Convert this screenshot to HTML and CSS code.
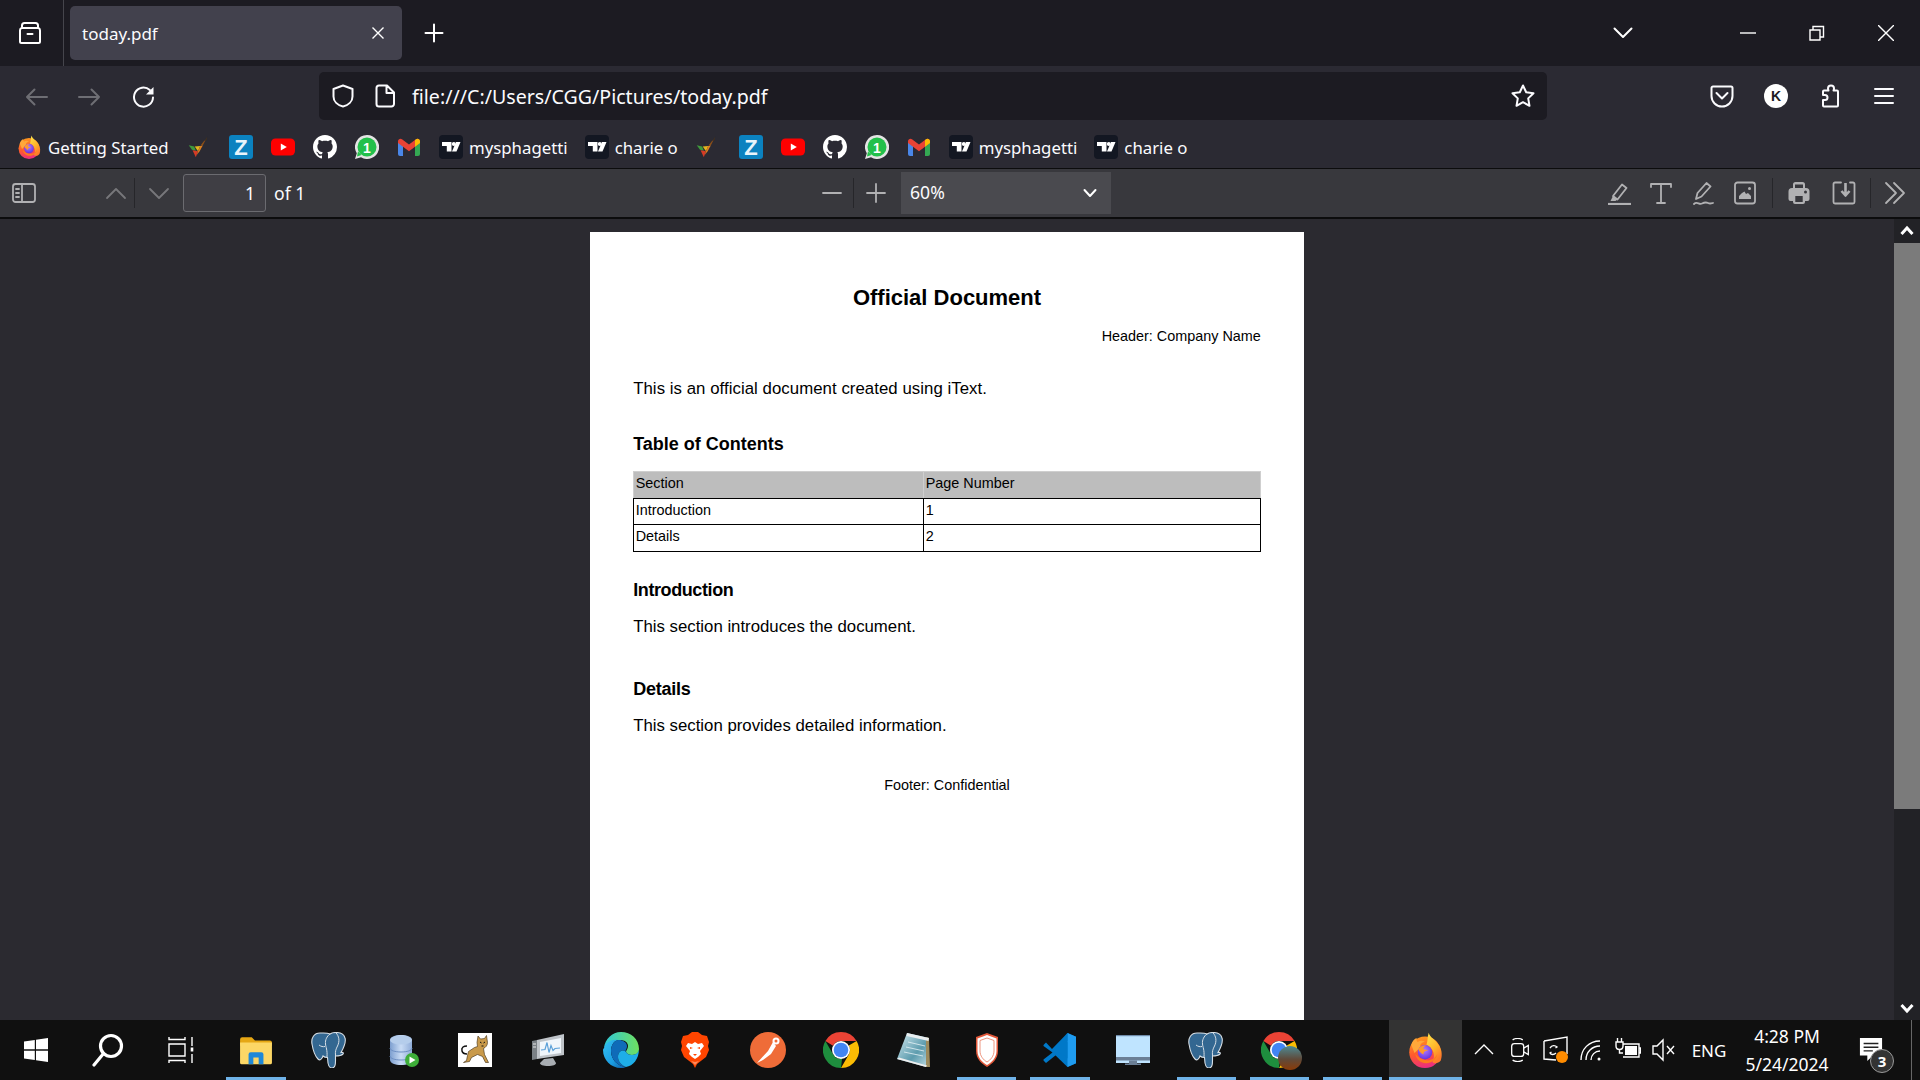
FILE: index.html
```html
<!DOCTYPE html>
<html lang="en">
<head>
<meta charset="utf-8">
<title>today.pdf</title>
<link rel="stylesheet" href="styles.css">
</head>
<body>
<svg class="defs" width="0" height="0" aria-hidden="true">
  <defs>
    <linearGradient id="ffBody" x1="0.35" y1="0" x2="0.6" y2="1"><stop offset="0" stop-color="#ff9a1e"/><stop offset=".5" stop-color="#ff5a2c"/><stop offset="1" stop-color="#ea2a86"/></linearGradient>
    <linearGradient id="ffFlame" x1="0" y1="0" x2="0.5" y2="1"><stop offset="0" stop-color="#ffe84e"/><stop offset=".6" stop-color="#ffb52a"/><stop offset="1" stop-color="#ff7a2a"/></linearGradient>
    <radialGradient id="ffCore" cx=".45" cy=".35" r=".75"><stop offset="0" stop-color="#b07cff"/><stop offset=".7" stop-color="#7542e5"/><stop offset="1" stop-color="#592acb"/></radialGradient>
    <linearGradient id="edgeA" x1="0" y1="0" x2="1" y2="1"><stop offset="0" stop-color="#35c1f1"/><stop offset=".6" stop-color="#1b9de2"/><stop offset="1" stop-color="#0c59a4"/></linearGradient>
    <linearGradient id="edgeB" x1="0" y1="0" x2="1" y2="0"><stop offset="0" stop-color="#2fc8d8"/><stop offset="1" stop-color="#6fe05f"/></linearGradient>
    <linearGradient id="dbG" x1="0" y1="0" x2="1" y2="0"><stop offset="0" stop-color="#7d9fd0"/><stop offset=".5" stop-color="#c9dcf5"/><stop offset="1" stop-color="#8facd8"/></linearGradient>
    <linearGradient id="noteG" x1="0" y1="0" x2="1" y2="1"><stop offset="0" stop-color="#d8edf3"/><stop offset=".6" stop-color="#5d9cae"/><stop offset="1" stop-color="#c5dfe6"/></linearGradient>
    <symbol id="i-ff" viewBox="0 0 24 24">
      <circle cx="12" cy="13.500" r="10.500" fill="url(#ffBody)"/>
      <path d="M14.500.5c.5 3 4.500 4.500 7 8.500 2 3.500 2 7 1 10-1.500 2-4.500 2.500-5.500 1 2-4 1-9-4-11.500 1-2.500.5-5.500 1.500-8z" fill="url(#ffFlame)"/>
      <path d="M2.800 8.500C3.500 6 5 4.500 6.500 4c-.5 1.200 0 2 .6 2.600 1.500-1 3.400-1.100 4.900-.1-2.500.5-3.500 2-3 3.500L5 14z" fill="#ffa83a"/>
      <path d="M5.500 14.500c.8 4 3.800 6.300 7.300 6.300 3.800 0 6.700-2.500 7.400-6-1.400 2.700-4 4.200-7 4-3.400-.2-6-1.800-7.700-4.300z" fill="#ff7a1e"/>
      <circle cx="12" cy="13.500" r="4.800" fill="url(#ffCore)"/>
      <path d="M7.500 11.500c1-1.700 3-2.700 5.300-2.500-1.300.6-2 1.500-1.800 2.500.8.400 2.500.3 3.300.8-2-.1-3.500 1-3.300 2.700-1.300-.6-2.800-1.900-3.500-3.500z" fill="#ff9a2a"/>
    </symbol>
    <symbol id="i-v" viewBox="2 1.500 19 22">
      <path d="M3 11l5 1 1.500 4L6 15z" fill="#3f9a3c"/><path d="M8.500 12l5-.5-2 5z" fill="#e3b71e"/><path d="M6.500 15.500l5 1-2 5.500z" fill="#d63b26"/><path d="M11.500 16.500l2-5 2.500-.5-3 5.500-2.500 3z" fill="#df7f1f"/><path d="M14 11l3-4 1.500-1-2.500 5z" fill="#8c4f18"/><path d="M17.500 7l2.500-4-1 3.500z" fill="#4a3218"/>
    </symbol>
    <symbol id="i-z" viewBox="0 0 24 24">
      <rect width="24" height="24" rx="3" fill="#0b82c0"/><text x="12" y="20" class="zt" text-anchor="middle">Z</text>
    </symbol>
    <symbol id="i-yt" viewBox="0 0 24 24">
      <rect y="3.500" width="24" height="17" rx="4.500" fill="#f00"/><path d="M9.800 8.500v7l6-3.500z" fill="#fff"/>
    </symbol>
    <symbol id="i-gh" viewBox="0 0 16 16">
      <path fill="#fff" d="M8 0C3.580 0 0 3.580 0 8c0 3.540 2.290 6.530 5.470 7.590.4.070.55-.17.55-.38 0-.19-.01-.82-.01-1.490-2.010.37-2.530-.49-2.690-.94-.09-.23-.48-.94-.82-1.130-.28-.15-.68-.52-.01-.53.63-.01 1.080.58 1.230.82.72 1.210 1.870.87 2.330.66.07-.52.28-.87.51-1.070-1.780-.2-3.640-.89-3.640-3.950 0-.87.31-1.590.82-2.150-.08-.2-.36-1.020.08-2.120 0 0 .67-.21 2.200.82.64-.18 1.320-.27 2-.27.68 0 1.360.09 2 .27 1.530-1.040 2.200-.82 2.200-.82.44 1.100.16 1.920.08 2.120.51.56.82 1.270.82 2.150 0 3.070-1.870 3.750-3.650 3.950.29.25.54.73.54 1.480 0 1.070-.01 1.930-.01 2.200 0 .21.15.46.55.38A8.013 8.013 0 0016 8c0-4.420-3.580-8-8-8z"/>
    </symbol>
    <symbol id="i-wa" viewBox="0 0 24 24">
      <path d="M12 0a12 12 0 0 0-10.200 18.300L0 24l6-1.700A12 12 0 1 0 12 0z" fill="#e4e4e4"/>
      <circle cx="12" cy="12" r="9.500" fill="#22c04a"/><path d="M3 16.500l-1 5 4.500-1.500z" fill="#22c04a"/>
      <text x="12" y="17.500" class="wt" text-anchor="middle">1</text>
    </symbol>
    <symbol id="i-gm" viewBox="0 0 24 24">
      <path d="M1 7h5v14H3a2 2 0 0 1-2-2z" fill="#4a86e8"/><path d="M18 7h5v12a2 2 0 0 1-2 2h-3z" fill="#34a853"/>
      <path d="M1 6.500C1 4 3.500 3 5 4.200l7 5.300 7-5.300C20.500 3 23 4 23 6.500V8l-11 8.200L1 8z" fill="#ea4335"/>
      <path d="M18 5.200l1-1C20.500 3 23 4 23 6.500V8l-5 3.800z" fill="#fbbc04"/>
    </symbol>
    <symbol id="i-tv" viewBox="0 0 24 24">
      <rect width="24" height="24" rx="4" fill="#131722"/>
      <path d="M3 7h9.500v9.500h-4.700V11H3z" fill="#fff"/><circle cx="14.800" cy="9" r="2" fill="#fff"/>
      <path d="M17 7h4.500l-4 9.500h-4.500z" fill="#fff"/>
    </symbol>
    <symbol id="i-pg" viewBox="0 0 36 36">
      <path d="M9 1C3 1 0 6 1 12c1 6 3 12 6 15 2 2 4 0 5-3 1 1 3 1.500 4.500 1.500l.5 5.500c.5 3 2 5 4 5 2.500 0 3.500-3 3.500-7v-5c2.500 0 5.500 0 7.500-2 1-1 0-2-2-1.500 3-5.500 5-11.500 4-14.500-1-4-5-5.500-9-5.500-2.500 0-4.500.5-6 1.500C16 .5 13 1 9 1z" fill="#336791" stroke="#d7dfe6" stroke-width="1.100"/>
      <path d="M19 2c-3 2-5 6-4.500 10 .3 3 2 6 1.500 13M25 1c3 3 4 8 1.500 13-1.500 3-2.500 5-2 10M8 13c2 1.500 4 2 6 1.500" fill="none" stroke="#d7dfe6" stroke-width="1"/>
    </symbol>
    <symbol id="i-chrome" viewBox="0 0 36 36">
      <path d="M18 0a18 18 0 0 1 15.600 9H18a9 9 0 0 0-8 4.800L2.400 9A18 18 0 0 1 18 0z" fill="#ea4335"/>
      <path d="M33.600 9A18 18 0 0 1 18 36l7.800-13.500a9 9 0 0 0 0-9z" fill="#fbbc04"/>
      <path d="M2.400 9l7.800 13.500a9 9 0 0 0 8 4.500h.8L18 36A18 18 0 0 1 2.400 9z" fill="#1e8e3e"/>
      <circle cx="18" cy="18" r="9" fill="#fff"/><circle cx="18" cy="18" r="7.300" fill="#4285f4"/>
    </symbol>
  </defs>
</svg>

<div class="tabbar">
  <div class="tabs-btn">
    <svg class="s24 line-w" viewBox="0 0 24 24"><path d="M4 6V4.500C4 3 5 2 6.500 2h11C19 2 20 3 20 4.500V6M3.500 7h17A2.500 2.500 0 0 1 22 9.500v11a1.500 1.500 0 0 1-1.500 1.500h-17A1.500 1.500 0 0 1 2 20.500v-11A2.500 2.500 0 0 1 3.500 7zM9.500 13h5"/></svg>
  </div>
  <div class="tab">
    <span class="tab-title">today.pdf</span>
    <svg class="s16 line-w thin" viewBox="0 0 16 16"><path d="M2.500 2.500l11 11M13.500 2.500l-11 11"/></svg>
  </div>
  <div class="newtab"><svg class="s20 line-w" viewBox="0 0 20 20"><path d="M10 1.500v17M1.500 10h17"/></svg></div>
  <div class="tabs-list"><svg class="s20 line-w" viewBox="0 0 20 20"><path d="M1.500 5.500l8.500 8.500 8.500-8.500"/></svg></div>
  <div class="wbtn"><svg class="s16 line-w thin" viewBox="0 0 16 16"><path d="M0 8h16"/></svg></div>
  <div class="wbtn"><svg class="s16 line-w thin" viewBox="0 0 16 16"><path d="M1 5h10v10H1zM4 5V1.500h10.500V12H11"/></svg></div>
  <div class="wbtn"><svg class="s16 line-w thin" viewBox="0 0 16 16"><path d="M0 0l16 16M16 0L0 16"/></svg></div>
</div>

<div class="navbar">
  <div class="nbtn lft dim"><svg class="s24 line" viewBox="0 0 24 24"><path d="M23 12H3M10.500 4.500L3 12l7.500 7.500"/></svg></div>
  <div class="nbtn lft dim"><svg class="s24 line" viewBox="0 0 24 24"><path d="M1 12h20M13.500 4.500L21 12l-7.500 7.500"/></svg></div>
  <div class="nbtn lft"><svg class="s24 line" viewBox="0 0 24 24"><path d="M21 12.500a9.500 9.500 0 1 1-3.200-7.500"/><path class="fillc" d="M21.500 2v7.500H14z"/></svg></div>
  <div class="urlbar">
    <svg class="s24 line" viewBox="0 0 24 24"><path d="M12 1.500L2.500 5v7.500c0 5 4 8.800 9.500 10 5.500-1.200 9.500-5 9.500-10V5z"/></svg>
    <svg class="s24 line page-ic" viewBox="0 0 24 24"><path d="M6 1.500h8l7 7v11.500a2.500 2.500 0 0 1-2.500 2.500h-12.500A2.500 2.500 0 0 1 3.500 20V4A2.500 2.500 0 0 1 6 1.500zM13.500 1.500V9H21"/></svg>
    <span class="url">file:///C:/Users/CGG/Pictures/today.pdf</span>
    <svg class="s24 line star" viewBox="0 0 24 24"><path d="M12 1.500l3.200 6.800 7.300 1-5.300 5.100 1.300 7.400-6.500-3.600-6.500 3.600 1.300-7.400-5.300-5.100 7.300-1z"/></svg>
  </div>
  <div class="nbtn first-right"><svg class="s24 line" viewBox="0 0 24 24"><path d="M3 2.500h18a1.500 1.500 0 0 1 1.500 1.500v8a10.500 10.500 0 0 1-21 0V4A1.500 1.500 0 0 1 3 2.500zM6.500 9l5.500 5.500L17.500 9"/></svg></div>
  <div class="nbtn"><div class="avatar">K</div></div>
  <div class="nbtn"><svg class="s24 line" viewBox="0 0 24 24"><path d="M13 1.500c-2 0-3 1.500-3 3 0 1 .3 1.500.5 2H6a1 1 0 0 0-1 1V11h2c1.500 0 2.500 1 2.500 2.500S8.500 16 7 16H5v5.500a1 1 0 0 0 1 1h13a1 1 0 0 0 1-1v-14a1 1 0 0 0-1-1h-3.500c.2-.5.5-1 .5-2 0-1.500-1-3-3-3z"/></svg></div>
  <div class="nbtn"><svg class="s24 line" viewBox="0 0 24 24"><path d="M3 5h18M3 12h18M3 19h18"/></svg></div>
</div>

<div class="bookmarks">
  <svg class="s24"><use href="#i-ff"/></svg><span class="bm-text gs">Getting Started</span>
  <div class="bm"><svg class="s24"><use href="#i-v"/></svg></div>
  <div class="bm bm-z"><svg class="s24"><use href="#i-z"/></svg></div>
  <div class="bm"><svg class="s24"><use href="#i-yt"/></svg></div>
  <div class="bm"><svg class="s24"><use href="#i-gh"/></svg></div>
  <div class="bm"><svg class="s24"><use href="#i-wa"/></svg></div>
  <div class="bm"><svg class="s24"><use href="#i-gm"/></svg></div>
  <div class="bm-lab"><svg class="s24"><use href="#i-tv"/></svg><span class="bm-text">mysphagetti</span></div>
  <div class="bm-lab"><svg class="s24"><use href="#i-tv"/></svg><span class="bm-text">charie o</span></div>
  <div class="bm bm-v2"><svg class="s24"><use href="#i-v"/></svg></div>
  <div class="bm bm-z"><svg class="s24"><use href="#i-z"/></svg></div>
  <div class="bm"><svg class="s24"><use href="#i-yt"/></svg></div>
  <div class="bm"><svg class="s24"><use href="#i-gh"/></svg></div>
  <div class="bm"><svg class="s24"><use href="#i-wa"/></svg></div>
  <div class="bm"><svg class="s24"><use href="#i-gm"/></svg></div>
  <div class="bm-lab"><svg class="s24"><use href="#i-tv"/></svg><span class="bm-text">mysphagetti</span></div>
  <div class="bm-lab"><svg class="s24"><use href="#i-tv"/></svg><span class="bm-text">charie o</span></div>
</div>

<div class="pdfbar">
  <div class="pbtn pb-side"><svg class="s24 line-g" viewBox="0 0 24 24"><rect x="1" y="3" width="22" height="18" rx="2.500"/><path d="M10 3v18M4 8h3M4 12h3M4 16h3"/></svg></div>
  <div class="pbtn pb-up dimg"><svg class="s24 line-g" viewBox="0 0 24 24"><path d="M3 17l9-9 9 9"/></svg></div>
  <div class="psep"></div>
  <div class="pbtn pb-down dimg"><svg class="s24 line-g" viewBox="0 0 24 24"><path d="M3 8l9 9 9-9"/></svg></div>
  <div class="pageinput">1</div>
  <span class="ofpages">of 1</span>
  <div class="pbtn pb-minus"><svg class="s24 line-g" viewBox="0 0 24 24"><path d="M3 12h18"/></svg></div>
  <div class="psep psep-z"></div>
  <div class="pbtn pb-plus"><svg class="s24 line-g" viewBox="0 0 24 24"><path d="M3 12h18M12 3v18"/></svg></div>
  <div class="zoomsel"><span class="zoomval">60%</span><svg class="s16 line-w" viewBox="0 0 16 16"><path d="M2.500 5l5.500 6 5.500-6"/></svg></div>
  <div class="pbtn pb-high"><svg class="s24 line-g" viewBox="0 0 24 24"><path d="M6 15l9-11.500 4.500 3.500-9 11.500z"/><path class="fillg" d="M6 15l4.500 3.500-2 1.500H3.500z"/><path d="M1 23.200h23" class="thick"/></svg></div>
  <div class="pbtn"><svg class="s24 line-g" viewBox="0 0 24 24"><path d="M2 6V3h20v3M12 3v19M8 22h8"/></svg></div>
  <div class="pbtn"><svg class="s24 line-g" viewBox="0 0 24 24"><path d="M5 18l1.500-6L15.500 2l4 3.500-9 10zM3 23c3-3 5 1 8-.5s4-1.500 6-.5 3 .5 5 0"/></svg></div>
  <div class="pbtn"><svg class="s24 line-g" viewBox="0 0 24 24"><rect x="2" y="1.500" width="20" height="21" rx="2.500"/><path class="fillg" d="M6 18v-3l3-3 2.500-1.500L13 13l2-1 3 3v3z"/><circle class="fillg" cx="16.500" cy="7.500" r="1.500"/></svg></div>
  <div class="psep psep-r1"></div>
  <div class="pbtn pb-print"><svg class="s24" viewBox="0 0 24 24"><path class="fillg" d="M6 7V3.500A2.500 2.500 0 0 1 8.500 1h7A2.500 2.500 0 0 1 18 3.500V7h1a3.500 3.500 0 0 1 3.500 3.500V18a2 2 0 0 1-2 2H18v1a2 2 0 0 1-2 2H8a2 2 0 0 1-2-2v-1H3.500a2 2 0 0 1-2-2v-7.500A3.500 3.500 0 0 1 5 7z"/><path class="holes" d="M8 3.500h8V7H8zM8.300 15h7.400v6H8.300z"/><circle class="holes" cx="18.500" cy="11" r="1.500"/></svg></div>
  <div class="pbtn pb-save"><svg class="s24 line-g" viewBox="0 0 24 24"><path d="M9 1.500H3A1.500 1.500 0 0 0 1.500 3v18A1.500 1.500 0 0 0 3 22.500h18a1.500 1.500 0 0 0 1.500-1.500V3A1.500 1.500 0 0 0 21 1.500h-3"/><path d="M13.500 2v11M9.500 10l4 4.500 4-4.500" class="thick"/></svg></div>
  <div class="psep psep-r2"></div>
  <div class="pbtn pb-more"><svg class="s24 line-g" viewBox="0 0 24 24"><path d="M3 2l10 10L3 22M11 2l10 10-10 10"/></svg></div>
</div>

<div class="viewer">
  <div class="pagewrap">
    <div class="page">
      <h1 class="doc-title">Official Document</h1>
      <p class="doc-header">Header: Company Name</p>
      <p class="doc-p doc-p1">This is an official document created using iText.</p>
      <h2 class="doc-h doc-toc">Table of Contents</h2>
      <table class="toc">
        <thead><tr><th class="col1">Section</th><th>Page Number</th></tr></thead>
        <tbody>
          <tr><td class="col1">Introduction</td><td>1</td></tr>
          <tr><td class="col1">Details</td><td>2</td></tr>
        </tbody>
      </table>
      <h2 class="doc-h doc-intro">Introduction</h2>
      <p class="doc-p doc-p2">This section introduces the document.</p>
      <h2 class="doc-h doc-details">Details</h2>
      <p class="doc-p doc-p3">This section provides detailed information.</p>
      <p class="doc-footer">Footer: Confidential</p>
    </div>
  </div>
  <div class="scrollbar">
    <div class="sb-arrow"><svg class="s14" viewBox="0 0 14 14"><path d="M1.500 10L7 4l5.500 6"/></svg></div>
    <div class="sb-thumb"></div>
    <div class="sb-rest"></div>
    <div class="sb-arrow"><svg class="s14" viewBox="0 0 14 14"><path d="M1.500 4L7 10l5.500-6"/></svg></div>
  </div>
</div>

<div class="taskbar">
  <div class="tb-start"><svg class="s24" viewBox="0 0 24 24"><path class="fillw" d="M0 3.500l10.800-1.500v9.300H0zM12 1.800L24 0v11.300H12zM0 12.700h10.800V22L0 20.500zM12 12.700h12V24l-12-1.800z"/></svg></div>
  <div class="tb-search"><svg class="s34" viewBox="0 0 34 34"><circle cx="20" cy="13" r="10.500" class="sw3"/><path d="M12.500 20.500L3 32" class="sw3"/></svg></div>
  <div class="tb-task"><svg class="s26 line-w thin" viewBox="0 0 26 28"><path d="M1 1v2.500h16V1M1 8h16v12H1zM1 27v-2.500h16V27M24 1v9M24 18v9"/><path d="M24 11.500v4" class="thick"/></svg></div>

  <div class="tb on"><svg class="s34" viewBox="0 0 32 32"><path d="M1 6a2 2 0 0 1 2-2h9l3 3h14a2 2 0 0 1 2 2v3H1z" fill="#e6a714"/><path d="M1 9h30v19a1.500 1.500 0 0 1-1.500 1.500h-27A1.500 1.500 0 0 1 1 28z" fill="#fcd766"/><path d="M9 29.500V20a2 2 0 0 1 2-2h10a2 2 0 0 1 2 2v9.500h-4.500V23h-5v6.500z" fill="#1e88d8"/></svg></div>
  <div class="tb"><svg class="s36"><use href="#i-pg"/></svg></div>
  <div class="tb"><svg class="s36" viewBox="0 0 36 36"><path d="M6 8c0-3 5-5 11-5s11 2 11 5v20c0 3-5 5-11 5S6 31 6 28z" fill="url(#dbG)"/><ellipse cx="17" cy="8" rx="11" ry="4.500" fill="#b5cdeb"/><path d="M6 16c0 2.500 5 4 11 4s11-1.500 11-4M6 24c0 2.500 5 4 11 4s11-1.500 11-4" fill="none" stroke="#6f90c4"/><circle cx="28" cy="28" r="7" fill="#3eae39"/><path d="M25.500 24.500v7l6-3.500z" fill="#fff"/></svg></div>
  <div class="tb"><svg class="s36" viewBox="0 0 36 36"><rect width="34" height="34" x="1" y="1" fill="#fff"/><path d="M21 4l2.500 3 4-.5 2-3 1 7c0 3-2 5-4 6l1 6 4 8h-3l-3-6-5-2-6 3-2 4-6 1 3-2 1-5 1-4 6-4 3-1-.5-4z" fill="#c99a4b" stroke="#3a2a12" stroke-width=".6"/><path d="M10 14c-3 0-6 1-5 5 .5 2 3 3 5 3" fill="none" stroke="#111" stroke-width="1.500"/><path d="M23 10l1.500 1M28 10l-1.500 1M24.500 14h2" stroke="#111" fill="none"/></svg></div>
  <div class="tb"><svg class="s36" viewBox="0 0 36 36"><path d="M7 8l27-6v21l-27 4z" fill="#bfc4c9"/><path d="M10 10l21-4v15l-21 3z" fill="#f0f6fb"/><path d="M11 18l4-.5 2-7 2 10 2-7 2 5 2-2 5-.5" fill="none" stroke="#5ba0d8" stroke-width="1.200"/><path d="M2 9l5-1v19l-5 1z" fill="#7a8085"/><path d="M14 27l9-1 3 5c0 2-3 3-8 3s-8-1-8-3z" fill="#a8adb2"/><path d="M3 12h3M3 15h3" stroke="#e8e8e8"/></svg></div>
  <div class="tb"><svg class="s36" viewBox="0 0 36 36"><path d="M18 0c10 0 18 7 18 17 0 3-2 6-7 6-3 0-5-1-6-3 0-2 2-3 2-6 0-4-4-6-8-6C9 8 4 11 1 16 2 7 9 0 18 0z" fill="url(#edgeB)"/><path d="M1 16C3 10 9 7 15 8c-4 1-7 5-7 11 0 8 6 15 15 16-2 1-3 1-5 1C8 36 0 28 0 18c0-.7.5-1.500 1-2z" fill="url(#edgeA)"/><path d="M15 8c4-.5 9 2 9 6 0 3-2 4-1 6-3-3-8-1-8 5 0 4 3 8 8 10C14 34 8 27 8 19c0-6 3-10 7-11z" fill="#0f6bb8"/><path d="M23 20c1 2 3 3 6 3 4 0 7-3 7-6 0 10-6 17-13 18-5-2-8-6-8-10 0-6 5-8 8-5z" fill="#1eaee8"/></svg></div>
  <div class="tb"><svg class="s36" viewBox="0 0 30 36"><path d="M8 3L12 0h6l4 3 5 1 2 6-1 4 1 4-3 7-9 7-2 4-2-4-9-7-3-7 1-4-1-4 2-6z" fill="#ff4500"/><path d="M15 33l-4-4 4 1 4-1z" fill="#ff8a5c"/><path d="M8 11l4 1 3-2 3 2 4-1 2 3-4 5 1 3-3 3-3 2-3-2-3-3 1-3-4-5z" fill="#fff"/><path d="M10 15l3 1-3 1zM20 15l-3 1 3 1zM13 22h4l-2 2z" fill="#ff4500"/></svg></div>
  <div class="tb"><svg class="s36" viewBox="0 0 36 36"><circle cx="18" cy="18" r="18" fill="#ef6c38"/><path d="M7 31l11-12 3 3-8 6zM18 19l5-9 3 4-5 8z" fill="#fff"/><circle cx="26" cy="9" r="3.500" fill="#fff"/><circle cx="26" cy="9" r="1.500" fill="#ef6c38"/></svg></div>
  <div class="tb"><svg class="s36"><use href="#i-chrome"/></svg></div>
  <div class="tb"><svg class="s36" viewBox="0 0 36 36"><path d="M11 1l22 5-3 29L1 27z" fill="url(#noteG)"/><path d="M30 5l3 1 1 29-4 0z" fill="#9c8a5c"/><path d="M11 1l22 5-.5 3L10.500 4z" fill="#e9eef0"/><path d="M1 27l29 8 1-1.500L3 25.500z" fill="#eee"/><path d="M12 10l17 4M10 15l18 4M8 20l19 4" stroke="#e6f2f6" stroke-width=".8" fill="none"/></svg></div>
  <div class="tb on"><svg class="s36" viewBox="0 0 30 36"><path d="M15 1l11 4v14c0 8-6 13-11 16C10 32 4 27 4 19V5z" fill="#e2583a"/><path d="M15 3l9.500 3.500V19c0 7-5 11.500-9.500 14C10.500 30.500 5.500 26 5.500 19V6.500z" fill="#fff"/><path d="M15 6l7 2.500V19c0 5-3.500 9-7 11-3.500-2-7-6-7-11V8.500z" fill="#fff" stroke="#ec8a72" stroke-width=".9"/></svg></div>
  <div class="tb on"><svg class="s36" viewBox="0 0 36 36"><path d="M25.500 1L34 4.800v26.400L25.500 35 11 21z" fill="#0078c8"/><path d="M25.500 1L34 4.800v26.400L25.500 35z" fill="#1f9cf0"/><path d="M25.500 10L14 18l11.500 8.500zM4 10.500L1.500 13v1l9 6.500-9 7v1L4 31l10-8 11.500-14V1L10 17z" fill="#0078c8"/></svg></div>
  <div class="tb"><svg class="s36" viewBox="0 0 36 36"><rect x="1" y="3" width="34" height="28" fill="#bfe4ff"/><rect x="1" y="3" width="34" height="1.200" fill="#6e8aa8"/><rect x="1" y="25" width="34" height="3.500" fill="#6b7f96"/><path d="M14 28.500h8v3h4V33H10v-1.500h4z" fill="#6b7f96"/></svg></div>
  <div class="tb on"><svg class="s36"><use href="#i-pg"/></svg></div>
  <div class="tb on chrome-user"><svg class="s36"><use href="#i-chrome"/></svg><div class="avatar-mini"></div></div>
  <div class="tb on"></div>
  <div class="tb on active"><svg class="s36"><use href="#i-ff"/></svg></div>

  <div class="tray">
    <div class="tr"><svg class="s20 line-w thin" viewBox="0 0 20 20"><path d="M1 14l9-9 9 9"/></svg></div>
    <div class="tr"><svg class="s24 line-w thin" viewBox="0 0 24 26"><rect x="3" y="6" width="13" height="14" rx="3"/><path d="M16 11l5-3v10l-5-3M4 2c3-2 8-2 11 0M4 24c3 2 8 2 11 0"/></svg></div>
    <div class="tr"><svg class="s26 line-w thin" viewBox="0 0 26 28"><path d="M1 5l23-4v17M1 5v18l12 1"/><path d="M7 12c2-3 5-3 7-1l-1.500 1M13 17c-2 2-5 2-6 0l1.500-1"/><circle cx="19" cy="21" r="6" class="orange"/></svg></div>
    <div class="tr"><svg class="s24 line-w thin" viewBox="0 0 24 24"><path d="M1 22c0-11 8-19 19-19M6 22c0-8 6-14 14-14M11 22c0-5 4-9 9-9"/><circle class="fillw" cx="19" cy="21" r="1.500"/></svg></div>
    <div class="tr"><svg class="s26 line-w thin" viewBox="0 0 26 26"><path d="M8 7h16v13H8M24 11h1.500v5H24"/><path class="fillw" d="M10 9h12v9H10z"/><path d="M2.500 1v4M6.500 1v4M1 5h7v4c0 2-1.500 3.500-3.500 3.500S1 11 1 9zM4.500 12.500V16H8"/></svg></div>
    <div class="tr"><svg class="s24 line-w thin" viewBox="0 0 24 24"><path d="M1 8h4l6-6v20l-6-6H1zM15 8l7 8M22 8l-7 8"/></svg></div>
    <div class="tr-eng">ENG</div>
    <div class="tr-clock"><div>4:28 PM</div><div>5/24/2024</div></div>
    <div class="tr-notif">
      <svg class="s24" viewBox="0 0 24 26"><path class="fillw" d="M0 0h24v19h-10l-6 6v-6H0z"/><path d="M4 6h16M4 10h16M4 14h10" class="dk"/></svg>
      <div class="notif-badge">3</div>
    </div>
    <div class="tr-desktop"></div>
  </div>
</div>
</body>
</html>
```
FILE: styles.css
```css
* { box-sizing: border-box; }
html, body { margin: 0; padding: 0; }
body {
  width: 1920px; height: 1080px; overflow: hidden;
  display: flex; flex-direction: column;
  background: #2b2a33; color: #fbfbfe;
  font-family: "Noto Sans", "Open Sans", sans-serif;
}
svg { display: block; flex: none; }
.defs { position: absolute; }
.s14 { width: 14px; height: 14px; }
.s16 { width: 16px; height: 16px; }
.s20 { width: 20px; height: 20px; }
.s24 { width: 24px; height: 24px; }
.s26 { width: 26px; height: 28px; }
.s34 { width: 34px; height: 34px; }
.s36 { width: 36px; height: 36px; }
.line, .line-w, .line-g { fill: none; stroke-width: 2; stroke-linecap: round; stroke-linejoin: round; }
.line { stroke: #fbfbfe; }
.line-w { stroke: #fff; }
.line-w.thin { stroke-width: 1.4; stroke-linecap: butt; stroke-linejoin: miter; }
.line-g { stroke: #b1b1b3; stroke-width: 1.800; }
.fillc { fill: #fbfbfe; stroke: none; }
.fillg { fill: #b1b1b3; stroke: none; }
.fillw { fill: #fff; stroke: none; }
.holes { fill: #38383d; stroke: none; }
.thick { stroke-width: 2.6; stroke-linecap: butt; }
.sw3 { fill: none; stroke: #fff; stroke-width: 3.2; stroke-linecap: round; }
.dk { fill: none; stroke: #222; stroke-width: 1.500; }
.orange { fill: #ff8c00; stroke: none; }
.zt { font: bold 22px "Liberation Sans", sans-serif; fill: #e8f4fb; }
.wt { font: bold 14px "Liberation Sans", sans-serif; fill: #fff; }

/* tab strip */
.tabbar { height: 66px; flex: none; display: flex; align-items: center; background: #1c1b22; }
.tabs-btn { width: 64px; height: 66px; padding-left: 18px; display: flex; align-items: center; border-right: 1px solid #45454c; }
.tab { width: 332px; height: 54px; margin-left: 6px; padding: 0 16px 0 12px; background: #42414d; border-radius: 5px; display: flex; align-items: center; justify-content: space-between; }
.tab-title { font-size: 17px; }
.newtab { margin-left: 22px; width: 20px; }
.tabs-list { margin-left: 1169px; width: 20px; margin-right: 80px; }
.wbtn { width: 69px; display: flex; justify-content: center; }

/* nav */
.navbar { height: 54px; flex: none; padding: 6px 0 0 9px; display: flex; align-items: center; background: #2b2a33; }
.nbtn { width: 54px; height: 48px; display: flex; align-items: center; justify-content: center; }
.nbtn.lft { padding-top: 2px; }
.nbtn.dim .line { stroke: #6e6e74; }
.urlbar { width: 1228px; height: 48px; margin-left: 148px; padding: 0 12px; background: #1c1b22; border-radius: 5px; display: flex; align-items: center; }
.page-ic { margin-left: 18px; }
.url { margin-left: 15px; padding-top: 1px; font-size: 19.6px; }
.star { margin-left: auto; }
.first-right { margin-left: 148px; }
.avatar { width: 24px; height: 24px; border-radius: 50%; background: #fff; color: #1c1b22; font: bold 14px/24px "Liberation Sans", sans-serif; text-align: center; }

/* bookmarks */
.bookmarks { height: 49px; flex: none; padding: 6px 0 0 17px; display: flex; align-items: center; background: #2b2a33; border-bottom: 1px solid #0c0c0d; }
.bm-text { font-size: 16.8px; color: #fbfbfe; }
.gs { margin-left: 7px; width: 129px; white-space: nowrap; }
.bm { width: 42px; display: flex; justify-content: center; }
.bm-z { margin-left: 1px; }
.bm-v2 { margin-left: 7.5px; }
.bm-lab { display: flex; align-items: center; margin-left: 9px; gap: 6px; }
.bm-lab + .bm-lab { margin-left: 17px; }
.bm-v2 + .bm-z { margin-left: 2.5px; }

/* pdf toolbar */
.pdfbar { height: 50px; flex: none; display: flex; align-items: center; padding: 0 0 0 6px; background: #38383d; border-bottom: 2px solid #0c0c0d; }
.pbtn { width: 42px; height: 40px; display: flex; align-items: center; justify-content: center; }
.pb-side { width: 36px; }
.pb-up { width: 36px; margin-left: 56px; }
.pb-down { width: 36px; margin-left: 6px; }
.dimg .line-g { stroke: #77777b; }
.psep { width: 1px; height: 30px; background: #26262a; flex: none; }
.pageinput { width: 83px; height: 38px; margin-left: 6px; padding-right: 10px; border: 1px solid #6b6b70; border-radius: 3px; background: #3f3e44; font-size: 17.6px; line-height: 36px; text-align: right; }
.ofpages { margin-left: 8px; font-size: 17.6px; width: 36px; }
.pb-minus { width: 36px; margin-left: 504px; }
.psep-z { margin-left: 3px; }
.pb-plus { width: 36px; margin-left: 4px; }
.zoomsel { width: 210px; height: 42px; margin-left: 7px; padding: 0 13px 0 9px; background: #4a4a4f; display: flex; align-items: center; justify-content: space-between; font-size: 17.6px; }
.zoomval { padding-bottom: 2px; }
.pb-high { margin-left: 487px; }
.psep-r1 { margin-left: 6px; }
.pb-print { margin-left: 5px; }
.pb-save { margin-left: 3px; }
.psep-r2 { margin-left: 5px; }
.pb-more { width: 48px; }

/* viewer */
.viewer { flex: 1; min-height: 0; display: flex; background: #2a2a2e; }
.pagewrap { flex: 1; min-width: 0; padding-top: 13px; display: flex; justify-content: center; overflow: hidden; background: #2b2a30; }
.page { width: 714px; height: 900px; padding: 52px 43.2px 0; background: #fff; color: #000; font-family: "Liberation Sans", Arial, sans-serif; }
.doc-title { margin: 0; font-size: 22px; line-height: 28px; font-weight: bold; text-align: center; }
.doc-header { margin: 15px 0 0; font-size: 14.4px; line-height: 18px; text-align: right; }
.doc-p { font-size: 16.8px; line-height: 20px; margin: 0; }
.doc-h { font-size: 18px; line-height: 24px; font-weight: bold; margin: 0; }
.doc-p1 { margin-top: 34px; letter-spacing: 0.05px; }
.doc-toc { margin-top: 33px; }
.toc { width: 100%; margin-top: 15px; border-collapse: collapse; table-layout: fixed; font-size: 14.4px; }
.toc th, .toc td { height: 26.7px; padding: 0 1.5px 3.5px; text-align: left; font-weight: normal; }
.toc th { background: #bdbdbd; border: 1px solid #cfcfcf; border-bottom-color: #000; }
.toc td { border: 1px solid #000; }
.col1 { width: 290px; }
.doc-intro { margin-top: 26px; letter-spacing: -0.4px; }
.doc-p2 { margin-top: 15px; }
.doc-details { margin-top: 40px; letter-spacing: -0.25px; }
.doc-p3 { margin-top: 15px; }
.doc-footer { margin: 40px 0 0; font-size: 14.4px; line-height: 18px; text-align: center; }
.scrollbar { width: 26px; flex: none; display: flex; flex-direction: column; background: #222226; }
.sb-arrow { height: 24px; display: flex; align-items: center; justify-content: center; }
.sb-arrow path { fill: none; stroke: #fff; stroke-width: 3; }
.sb-thumb { height: 566px; background: #7b7b7b; }
.sb-rest { flex: 1; }

/* taskbar */
.taskbar { height: 60px; flex: none; display: flex; align-items: center; background: #101010; }
.tb-start { width: 72px; display: flex; justify-content: center; }
.tb-search { width: 72px; display: flex; justify-content: center; }
.tb-task { width: 75.450px; padding-left: 24px; }
.tb { position: relative; width: 73.100px; height: 60px; flex: none; display: flex; align-items: center; justify-content: center; }
.tb.on::after { content: ""; position: absolute; left: 7px; right: 7px; bottom: 0; height: 3px; background: #6fb3e8; }
.tb.active { background: #333; }
.tb.active::after { left: 0; right: 0; }
.avatar-mini { position: absolute; left: 35px; top: 26px; width: 24px; height: 24px; border-radius: 50%; background: linear-gradient(#4d8a94, #5f4a3a 55%, #8a3b08); }
.tray { flex: 1; min-width: 0; height: 60px; padding-left: 4px; display: flex; align-items: center; }
.tr { width: 36px; display: flex; justify-content: center; }
.tr-eng { width: 54px; font-size: 17px; text-align: center; color: #fff; }
.tr-clock { width: 102px; text-align: center; font-size: 17.5px; line-height: 28px; color: #fff; }
.tr-notif { position: relative; width: 64px; height: 60px; padding-left: 21px; padding-top: 18px; }
.notif-badge { position: absolute; left: 32px; top: 29px; width: 24px; height: 24px; border-radius: 50%; background: #333; border: 1px solid #999; color: #fff; font-size: 15px; font-weight: bold; line-height: 22px; text-align: center; }
.tr-desktop { width: 1px; height: 60px; margin-left: 9px; background: #666; }
```
